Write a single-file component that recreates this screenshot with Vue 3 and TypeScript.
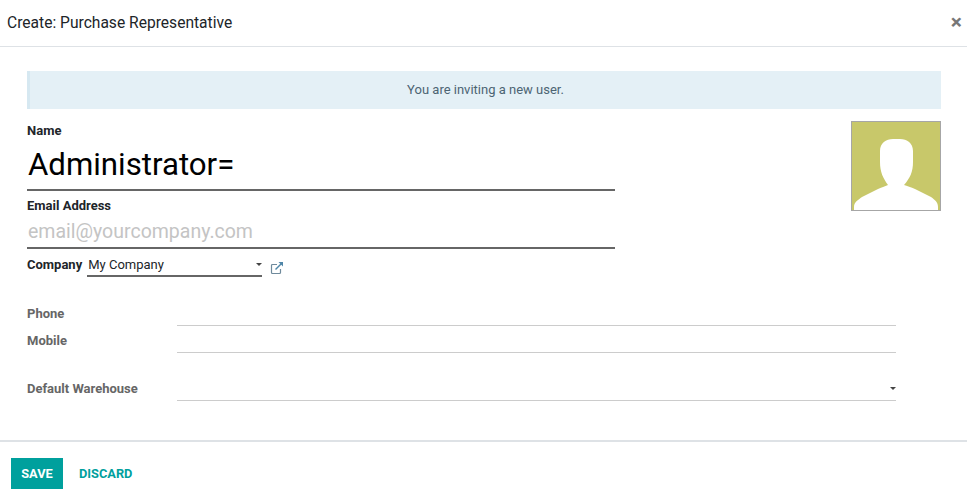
<script setup lang="ts">
const rows: { label: string; gap: number; caret?: boolean }[] = [
  { label: 'Phone', gap: 0 },
  { label: 'Mobile', gap: 0 },
  { label: 'Default Warehouse', gap: 21, caret: true },
]
</script>

<template>
  <div class="dialog">
    <header class="head">
      <h4 class="title">Create: Purchase Representative</h4>
      <span class="close">×</span>
    </header>
    <main class="body">
      <div class="alert">You are inviting a new user.</div>
      <div class="top">
        <div class="main-col">
          <div class="lbl first">Name</div>
          <div class="name">Administrator=</div>
          <div class="lbl email-lbl">Email Address</div>
          <div class="email">email@yourcompany.com</div>
          <div class="company">
            <span class="lbl">Company</span>
            <div class="select"><span>My Company</span><i class="caret"></i></div>
            <svg class="ext" viewBox="0 0 14 14" width="14" height="14">
              <path d="M10.5 8v3.5a1 1 0 0 1-1 1h-7a1 1 0 0 1-1-1v-7a1 1 0 0 1 1-1H7" fill="none" stroke="#6f8a9c" stroke-width="1.2" />
              <path d="M5.5 8.5 12 2" fill="none" stroke="#4f86a8" stroke-width="1.4" />
              <path d="M8.5 1h4.5v4.5z" fill="#4f86a8" />
            </svg>
          </div>
        </div>
        <div class="avatar">
          <svg viewBox="0 0 88 88" width="88" height="88">
            <path d="M2 88V85C2 80 6 78 10 75L26 67C30 65 34 64 36 63C31 56 28 50 28 40V29C28 21 34 17 41 17H48C55 17 61 21 61 29V40C61 50 58 56 52 63C55 64 59 65 63 67L79 75C83 78 86 80 86 85V88Z" fill="#fff" />
          </svg>
        </div>
      </div>
      <div class="fields">
        <div v-for="r in rows" :key="r.label" class="row" :style="{ marginTop: r.gap + 'px' }">
          <span class="lbl muted">{{ r.label }}</span>
          <div class="line"><i v-if="r.caret" class="caret"></i></div>
        </div>
      </div>
    </main>
    <footer class="foot">
      <button class="save">SAVE</button>
      <button class="discard">DISCARD</button>
    </footer>
  </div>
</template>

<style>
html, body { margin: 0; background: #fff; }
</style>

<style scoped>
.dialog {
  width: 967px;
  height: 499px;
  overflow: hidden;
  font-family: Roboto, sans-serif;
  font-size: 13px;
  color: #212529;
  background: #fff;
}
.head {
  height: 46px;
  border-bottom: 1px solid #dee2e6;
  display: flex;
  align-items: center;
  justify-content: space-between;
  padding: 0 7px;
}
.title { margin: 0; font-size: 15.6px; font-weight: 400; }
.close { font-size: 21px; font-weight: 700; color: #777; line-height: 1; position: relative; left: 2px; top: -1px; }
.body { padding: 24px 26px 0 27px; height: 393px; box-sizing: border-box; }
.alert {
  height: 38px;
  line-height: 38px;
  background: #e4f0f6;
  border-left: 3px solid #d6e8f1;
  box-sizing: border-box;
  text-align: center;
  color: #4c6473;
}
.top { display: flex; justify-content: space-between; }
.main-col { width: 588px; }
.lbl { font-weight: 700; line-height: 15px; }
.first { margin-top: 14px; }
.name {
  font-size: 31.2px;
  line-height: 48px;
  height: 45px;
  color: #000;
  padding-left: 1px;
  margin-top: 3px;
  border-bottom: 2px solid #666;
  padding-bottom: 3px;
}
.email-lbl { margin-top: 7px; }
.email {
  font-size: 19.5px;
  color: #c4c4c4;
  line-height: 27px;
  height: 27px;
  margin-top: 5px;
  padding: 0 0 2px 1px;
  border-bottom: 2px solid #666;
}
.company { display: flex; align-items: flex-start; margin-top: 8px; }
.select {
  width: 175px;
  height: 18px;
  margin-left: 5px;
  border-bottom: 2px solid #666;
  display: flex;
  align-items: flex-start;
  justify-content: space-between;
  line-height: 15px;
}
.select span { padding-left: 1px; }
.select .caret { margin: 6px 0 0; }
.caret {
  display: block;
  width: 0;
  height: 0;
  border-left: 3.5px solid transparent;
  border-right: 3.5px solid transparent;
  border-top: 3.5px solid #444;
}
.ext { margin: 4px 0 0 8px; }
.avatar {
  width: 90px;
  height: 90px;
  box-sizing: border-box;
  margin-top: 12px;
  background: #c8c86a;
  border: 1px solid #a6a6a6;
}
.avatar svg { display: block; }
.fields { margin-top: 26px; width: 869px; }
.row {
  display: flex;
  height: 27px;
}
.muted { color: #666; width: 150px; flex: none; padding-top: 3px; }
.line {
  flex: 1;
  border-bottom: 1px solid #ccc;
  position: relative;
  height: 22px;
}
.line .caret { position: absolute; right: 0; top: 9px; }
.foot {
  border-top: 2px solid #dee2e6;
  padding: 16px 11px;
  display: flex;
  align-items: center;
}
button {
  font-family: Roboto, sans-serif;
  font-size: 12.8px;
  font-weight: 700;
  border: none;
  cursor: pointer;
  height: 31px;
}
.save { background: #00a09d; color: #fff; width: 52px; padding: 0; }
.discard { background: none; color: #00a09d; margin-left: 16px; padding: 0; }
</style>
